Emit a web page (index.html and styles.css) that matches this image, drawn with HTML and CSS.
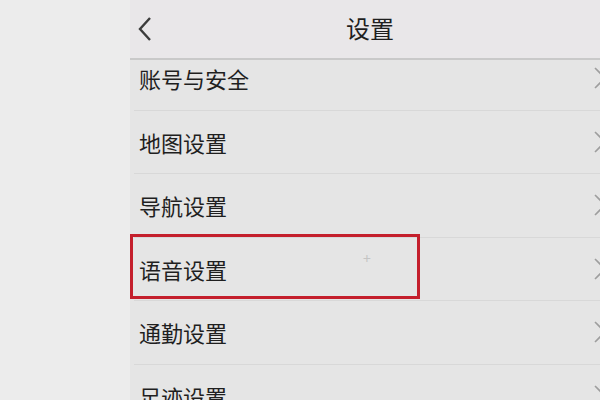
FILE: index.html
```html
<!DOCTYPE html>
<html lang="zh-CN">
<head>
    <meta charset="UTF-8">
    <title>设置</title>
    <link rel="stylesheet" href="styles.css">
</head>
<body>
    <div class="side"></div>

    <div class="screen">
        <div class="header">
            <svg class="back" width="18" height="26" viewBox="0 0 18 26">
                <path d="M14 2 L4 13 L14 24" fill="none" stroke="#3c3c3c" stroke-width="2.4"/>
            </svg>
            <div class="title">设置</div>
        </div>

        <div class="list">
            <div class="row">
                <span>账号与安全</span>
                <svg class="chev" width="16" height="24" viewBox="0 0 16 24"><path d="M3 2 L13 12 L3 22" fill="none" stroke="#9e9e9e" stroke-width="1.6"/></svg>
            </div>
            <div class="row">
                <span>地图设置</span>
                <svg class="chev" width="16" height="24" viewBox="0 0 16 24"><path d="M3 2 L13 12 L3 22" fill="none" stroke="#9e9e9e" stroke-width="1.6"/></svg>
            </div>
            <div class="row">
                <span>导航设置</span>
                <svg class="chev" width="16" height="24" viewBox="0 0 16 24"><path d="M3 2 L13 12 L3 22" fill="none" stroke="#9e9e9e" stroke-width="1.6"/></svg>
            </div>
            <div class="row marked">
                <span>语音设置</span>
                <span class="cursor">+</span>
                <svg class="chev" width="16" height="24" viewBox="0 0 16 24"><path d="M3 2 L13 12 L3 22" fill="none" stroke="#9e9e9e" stroke-width="1.6"/></svg>
                <div class="highlight"></div>
            </div>
            <div class="row">
                <span>通勤设置</span>
                <svg class="chev" width="16" height="24" viewBox="0 0 16 24"><path d="M3 2 L13 12 L3 22" fill="none" stroke="#9e9e9e" stroke-width="1.6"/></svg>
            </div>
            <div class="row">
                <span>足迹设置</span>
                <svg class="chev" width="16" height="24" viewBox="0 0 16 24"><path d="M3 2 L13 12 L3 22" fill="none" stroke="#9e9e9e" stroke-width="1.6"/></svg>
            </div>
        </div>
    </div>
</body>
</html>
```

FILE: styles.css
```css
body {
    margin: 0;
    width: 600px;
    height: 400px;
    overflow: hidden;
    display: flex;
    font-family: "Noto Sans CJK SC", "Noto Sans", sans-serif;
    background-color: #ebebeb;
    color: #1f1f1f;
}
.side {
    width: 130px;
    flex-shrink: 0;
    background-color: #ececec;
}
.screen {
    flex: 1;
    overflow: hidden;
    background-color: #e5e5e5;
    display: flex;
    flex-direction: column;
}
.header {
    height: 58px;
    border-bottom: 2px solid #c9c9c9;
    background-color: #e9e7e9;
    display: flex;
    align-items: center;
    position: relative;
}
.back {
    margin-left: 6px;
}
.title {
    position: absolute;
    left: 0;
    right: -10px;
    text-align: center;
    font-size: 24px;
    top: 10px;
}
.list {
    flex: 1;
    overflow: hidden;
}
.row {
    box-sizing: border-box;
    height: 63.5px;
    margin-left: 4px;
    padding-left: 5px;
    border-bottom: 1px solid #d8d8d8;
    display: flex;
    align-items: center;
    justify-content: space-between;
    font-size: 22px;
    position: relative;
}
.row:first-child {
    margin-top: -13px;
}
.chev {
    margin-right: -8px;
}
.marked {
    justify-content: flex-start;
}
.marked .chev {
    margin-left: auto;
}
.cursor {
    margin-left: 136px;
    margin-top: -22px;
    font-size: 14px;
    color: #c4c4c4;
}
.highlight {
    position: absolute;
    left: -4px;
    top: -4px;
    width: 290px;
    height: 65px;
    box-sizing: border-box;
    border: 3px solid #c41f2c;
}
```
